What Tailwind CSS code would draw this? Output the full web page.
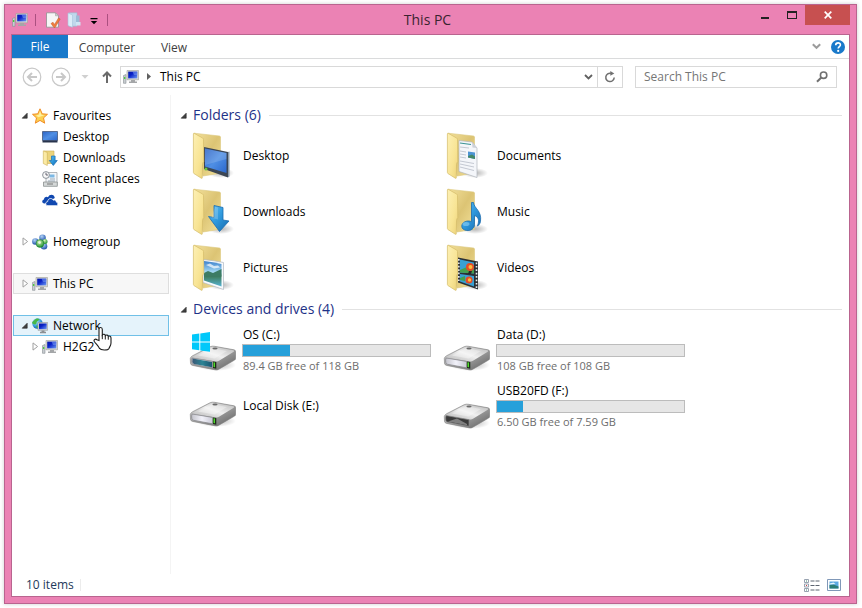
<!DOCTYPE html>
<html lang="en">
<head>
  <meta charset="UTF-8" />
  <meta name="viewport" content="width=device-width, initial-scale=1.0"/>
  <title>This PC</title>
  <script src="https://cdn.jsdelivr.net/npm/@tailwindcss/browser@4"></script>
</head>
<body class="h-screen bg-white pt-1 pl-1 pr-[5px] pb-1 font-['Open_Sans',sans-serif] text-[12px] leading-4 text-black">

  <!-- shared icons; not display:none, the gradients would stop working -->
  <svg class="absolute size-0" aria-hidden="true">
    <defs>
      <linearGradient id="flap" x1="0" y1="0" x2="1" y2="1"><stop offset="0" stop-color="#fdf0b4"/><stop offset=".6" stop-color="#f8e494"/><stop offset="1" stop-color="#ecd27a"/></linearGradient>
      <linearGradient id="back" x1="0" y1="0" x2="1" y2="1"><stop offset="0" stop-color="#f3e09a"/><stop offset=".5" stop-color="#dcc474"/><stop offset="1" stop-color="#f4e29c"/></linearGradient>
      <linearGradient id="screen" x1="0" y1="0" x2="1" y2="1"><stop offset="0" stop-color="#2b62c4"/><stop offset=".5" stop-color="#4f8fe4"/><stop offset="1" stop-color="#2a66cc"/></linearGradient>
      <linearGradient id="pcscreen" x1="0" y1="0" x2="1" y2="1"><stop offset="0" stop-color="#0518a8"/><stop offset=".4" stop-color="#0a22c8"/><stop offset="1" stop-color="#6f9cf4"/></linearGradient>
      <linearGradient id="arrow" x1="0" y1="0" x2="1" y2="1"><stop offset="0" stop-color="#5cc0f4"/><stop offset=".5" stop-color="#2e98dc"/><stop offset="1" stop-color="#1668ac"/></linearGradient>
      <linearGradient id="dtop" x1="0" y1="1" x2="1" y2="0"><stop offset="0" stop-color="#b4b4b4"/><stop offset=".5" stop-color="#f0f0f0"/><stop offset="1" stop-color="#b8b8b8"/></linearGradient>
      <linearGradient id="dside" x1="0" y1="0" x2="1" y2="1"><stop offset="0" stop-color="#dadada"/><stop offset=".5" stop-color="#a2a2a2"/><stop offset="1" stop-color="#5e5e5e"/></linearGradient>
      <linearGradient id="dfront" x1="0" y1="0" x2="1" y2="0"><stop offset="0" stop-color="#c4c4cc"/><stop offset=".5" stop-color="#f2f2fa"/><stop offset="1" stop-color="#cacad6"/></linearGradient>
      <linearGradient id="teal" x1="0" y1="0" x2="1" y2="0"><stop offset="0" stop-color="#3a5876"/><stop offset=".5" stop-color="#2c8494"/><stop offset="1" stop-color="#1c5470"/></linearGradient>
      <linearGradient id="sky" x1="0" y1="0" x2="0" y2="1"><stop offset="0" stop-color="#3c80cc"/><stop offset=".45" stop-color="#a8dcf4"/><stop offset=".6" stop-color="#3e7c5c"/><stop offset="1" stop-color="#58b4d4"/></linearGradient>
      <radialGradient id="shade"><stop offset="0" stop-color="#000" stop-opacity=".3"/><stop offset="1" stop-color="#000" stop-opacity="0"/></radialGradient>
      <radialGradient id="globe" cx=".35" cy=".3" r=".8"><stop offset="0" stop-color="#b4ecf8"/><stop offset=".6" stop-color="#2e98dc"/><stop offset="1" stop-color="#0c4494"/></radialGradient>
      <radialGradient id="ballb" cx=".4" cy=".3" r=".7"><stop offset="0" stop-color="#b4d4f8"/><stop offset="1" stop-color="#1c50a8"/></radialGradient>
      <radialGradient id="ballg" cx=".4" cy=".3" r=".7"><stop offset="0" stop-color="#d0f4b0"/><stop offset="1" stop-color="#1e9030"/></radialGradient>
    </defs>

    <symbol id="pc" viewBox="0 0 16 16">
      <path d="M.5 6.5 3 5.5v8.8H.5z" fill="#c8ccd0" stroke="#888e94" stroke-width=".6"/>
      <path d="M1 8h1.3v2H1z" fill="#4ccc3c"/>
      <path d="M4 1.5h11.500v9.300H4z" fill="#dcdcd4" stroke="#9a9c98" stroke-width=".6"/>
      <path d="M5.200 2.600h9.100v6.800H5.200z" fill="url(#pcscreen)"/>
      <path d="M9.500 2.600h4.800v3.500L11 6z" fill="#7ca0f4" opacity=".55"/>
      <path d="M8 11h4v1.600h2v1.400H6v-1.400h2z" fill="#a4a6a8"/>
    </symbol>

    <symbol id="folder" viewBox="0 0 48 48">
      <ellipse cx="33" cy="41" rx="13" ry="5" fill="url(#shade)"/>
      <path d="M6 1.200 31.500 4q1 .2 1 1.200v36L15 44z" fill="url(#back)" stroke="#dcc87c" stroke-width=".6"/>
    </symbol>
    <symbol id="flapfront" viewBox="0 0 48 48">
      <path d="M5.400 2q0-1 1-.6L14.600 6q.8.500.9 1.500l.3 22q-1 1-1.300 3l-.2 13.200q0 1-1 .5l-7.300-4.600q-.6-.4-.6-1.200z" fill="url(#flap)" stroke="#d4bc68" stroke-width=".7"/>
    </symbol>

    <symbol id="drive" viewBox="0 0 48 48">
      <ellipse cx="28" cy="39" rx="20" ry="6" fill="url(#shade)"/>
      <path d="M2.300 32.500q.2-1.500 2-2.600L22 20.800q2-1 4.500-.5l19.500 3.500q1.600.3 1.700 2v6.500q0 1-1 1.700L30.500 43.400q-1.500.9-3 .5L4.500 39.400q-1.700-.4-2-1.900z" fill="url(#dside)" stroke="#808080" stroke-width=".6"/>
      <path d="M4 31 22.500 21.300q1.700-.8 4-.4L45.500 24.300q1.500.5.200 1.400L31 34.800q-1.500.9-3 .6L4.500 31.800z" fill="url(#dtop)"/>
      <path d="m10 29.500 14-7.300 15 2.800-12.500 7.400z" fill="#fff" opacity=".35"/>
      <ellipse cx="27" cy="22.500" rx="2.600" ry=".9" fill="#6a6a6a"/>
    </symbol>
    <symbol id="panel" viewBox="0 0 48 48">
      <path d="m4 32 20.500 3.400v6.400L5.500 38.300q-1.500-.3-1.700-1.800-.5-2.500.2-4.500z" fill="url(#dfront)" stroke="#848488" stroke-width=".7"/>
      <path d="m25 35.500 3.300.5v6.700l-3.300-.6z" fill="#1c2c18"/>
      <path d="m25.500 36.200 1.500.2v4.800l-1.500-.2z" fill="#4fd82c"/>
    </symbol>
    <symbol id="open" viewBox="0 0 7 7"><path d="M6.200 1.200v5H1.200z" fill="#404040" stroke="#222" stroke-width=".6"/></symbol>
    <symbol id="closed" viewBox="0 0 7 9"><path d="M1 .9 5.600 4.500 1 8.100z" fill="#fff" stroke="#a0a0a0"/></symbol>
  </svg>

  <div class="flex h-full flex-col border border-[#b9648f] bg-[#eb82b4] px-[6px] pb-[6px] shadow-[0_0_4px_rgba(0,0,0,0.2)]">

    <header class="flex h-[29px] shrink-0 items-center">
      <div class="flex items-center">
        <svg class="ml-px size-4" role="img" aria-label="This PC"><use href="#pc"/></svg>
        <span class="ml-[7px] h-3 w-px bg-[#ab5080]"></span>
        <button class="ml-[9px]" aria-label="Properties">
          <svg class="size-4" viewBox="0 0 16 16"><path d="M1.500.8h9l3 3v11.400h-12z" fill="#f6f6f6" stroke="#909090" stroke-width=".8"/><path d="M10.500.8v3h3z" fill="#d0d0d0" stroke="#a0a0a0" stroke-width=".6"/><path d="m6 11.500 2-1.300 1.500 2.200L13.500 6l1.700 1L10 15.600H9z" fill="#ee7c40" stroke="#c85c28" stroke-width=".5"/></svg>
        </button>
        <button class="ml-[6px]" aria-label="New folder">
          <svg class="size-4" viewBox="0 0 16 16"><path d="M2 .8h8v13.400H2z" fill="#c0d8ec" stroke="#98b8d0" stroke-width=".6"/><path d="M9 3.500h3.500v9.500H9z" fill="#9cbcd8"/><path d="M1 1l4.500 2v12.300L1 13.600z" fill="#dcecf8" stroke="#a8c4dc" stroke-width=".6"/><path d="M9 10h4.500v3.500H9z" fill="#d0e4f4"/></svg>
        </button>
        <button class="ml-[7px]" aria-label="Customise toolbar">
          <svg class="h-3 w-2" viewBox="0 0 8 12"><path d="M.5 4h7v1.200h-7zM.8 7h6.400L4 10.300z" fill="#000"/></svg>
        </button>
        <span class="ml-[9px] h-3 w-px bg-[#ab5080]"></span>
      </div>
      <h1 class="flex-1 pr-1 text-center text-[14px] leading-5 text-[#3a2430]">This PC</h1>
      <div class="flex self-start">
        <button class="flex h-5 w-[27px] items-center justify-center" aria-label="Minimise"><svg class="h-3 w-2" viewBox="0 0 8 12"><path d="M0 8h8v2H0z" fill="#222"/></svg></button>
        <button class="flex h-5 w-[27px] items-center justify-center" aria-label="Maximise"><svg class="h-2 w-[10px]" viewBox="0 0 10 8"><path d="M0 0h10v8H0zM1 2v5h8V2z" fill="#222" fill-rule="evenodd"/></svg></button>
        <button class="flex h-5 w-[45px] items-center justify-center bg-[#c75050]" aria-label="Close"><svg class="size-2" viewBox="0 0 8 8"><path d="m.7.7 6.600 6.600m0-6.600L.7 7.300" stroke="#fff" stroke-width="1.700"/></svg></button>
      </div>
    </header>

    <div class="flex min-h-0 flex-1 flex-col border border-[#b9648f] bg-white">

      <nav class="flex h-6 shrink-0 items-center border-b border-[#dadbdc] text-[#404040]">
        <button class="h-full w-14 bg-[#1979ca] text-white">File</button>
        <button class="h-full w-[78px] pt-[2px]">Computer</button>
        <button class="h-full w-14 pt-[2px]">View</button>
        <div class="ml-auto flex items-center gap-[10px] pr-1">
          <button aria-label="Expand the ribbon"><svg class="block h-[7px] w-[9px]" viewBox="0 0 9 7"><path d="m.8 1.200 3.700 3.600 3.700-3.600" fill="none" stroke="#9c9c9c" stroke-width="2"/></svg></button>
          <button aria-label="Help"><svg class="block size-[14px]" viewBox="0 0 14 14"><circle cx="7" cy="7" r="7" fill="#1979ca"/><path d="M4.700 5.200c0-3.200 4.900-3 4.700-.2C9.300 6.500 7.200 6.700 7.200 8.500" fill="none" stroke="#fff" stroke-width="1.600"/><circle cx="7.200" cy="10.900" r="1.100" fill="#fff"/></svg></button>
        </div>
      </nav>

      <div class="flex h-9 shrink-0 items-center pr-3 pb-px pl-[10px]">
        <button aria-label="Back"><svg class="block size-5" viewBox="0 0 20 20" fill="none" stroke="#c8c8c8"><circle cx="10" cy="10" r="8.800" stroke-width="1.200"/><path d="M15 10H6m4-4-4 4 4 4" stroke-width="2"/></svg></button>
        <button class="ml-[9px]" aria-label="Forward"><svg class="block size-5" viewBox="0 0 20 20" fill="none" stroke="#c8c8c8"><circle cx="10" cy="10" r="8.800" stroke-width="1.200"/><path d="M5 10h9m-4-4 4 4-4 4" stroke-width="2"/></svg></button>
        <button class="ml-[10px]" aria-label="Recent locations"><svg class="block h-1 w-2" viewBox="0 0 8 4"><path d="M.5 0h7L4 3.800z" fill="#d0d0d0"/></svg></button>
        <button class="ml-[13px]" aria-label="Up"><svg class="block h-3 w-[10px]" viewBox="0 0 10 12"><path d="M5 12V1.500M1 5.500l4-4 4 4" fill="none" stroke="#6a6a6a" stroke-width="2"/></svg></button>
        <div class="ml-2 flex h-[22px] flex-1 items-center border border-[#d9d9d9]">
          <svg class="ml-[2px] size-4"><use href="#pc"/></svg>
          <svg class="ml-2 h-[7px] w-1" viewBox="0 0 4 7"><path d="M0 0v7l4-3.500z" fill="#606060"/></svg>
          <button class="ml-[9px]">This PC</button>
          <button class="mr-1 ml-auto" aria-label="Previous locations"><svg class="block h-[6px] w-[9px]" viewBox="0 0 9 6"><path d="m1 1 3.500 3.500L8 1" fill="none" stroke="#606060" stroke-width="1.800"/></svg></button>
          <button class="flex h-full w-[25px] items-center justify-center border-l border-[#d9d9d9]" aria-label="Refresh"><svg class="block size-3" viewBox="0 0 12 12"><path d="M7 2.300A4.200 4.200 0 1 0 10.200 6.500" fill="none" stroke="#707070" stroke-width="1.500"/><path d="M6.300 0v4.800l4-2.400z" fill="#707070"/></svg></button>
        </div>
        <div class="ml-3 flex h-[22px] w-[202px] items-center border border-[#d9d9d9] px-2">
          <input type="search" aria-label="Search This PC" placeholder="Search This PC" class="min-w-0 flex-1 outline-none placeholder:text-[#767676]"/>
          <svg class="size-3" viewBox="0 0 12 12"><circle cx="7.600" cy="4.200" r="3.200" fill="none" stroke="#707070" stroke-width="1.600"/><path d="M5.300 6.500 1 10.800" stroke="#707070" stroke-width="2"/></svg>
        </div>
      </div>

      <div class="flex min-h-0 flex-1">
        <aside class="w-[159px] shrink-0 border-r border-[#f4f4f4] pt-[10px] pr-px pl-px">
          <ul>
            <li><a href="#" class="flex h-[21px] items-center pl-2"><svg class="size-[7px]"><use href="#open"/></svg>
              <svg class="mr-[5px] ml-1 size-4" viewBox="0 0 16 16"><path d="m8 .8 2.200 5 5.300.5-4 3.600 1.200 5.300L8 12.400l-4.700 2.800 1.200-5.300-4-3.600 5.300-.5z" fill="#fcd050" stroke="#f08c28"/><path d="m8 3 1.300 3.800 3 .5-5.800 2L4 7.500l2.800-.7z" fill="#fff0a0"/></svg>Favourites</a></li>
            <li><a href="#" class="flex h-[21px] items-center pl-[29px]"><svg class="mr-[5px] size-4" viewBox="0 0 16 16"><path d="M.5 2.500h15v9H.5z" fill="url(#screen)" stroke="#44587c" stroke-width=".8"/><path d="M.5 11.500h15v2H.5z" fill="#28344c"/></svg>Desktop</a></li>
            <li><a href="#" class="flex h-[21px] items-center pl-[29px]"><svg class="mr-[5px] size-4" viewBox="0 0 16 16"><path d="M2 1h10v12.500H5z" fill="#ecd47c" stroke="#ccb058" stroke-width=".6"/><path d="m1.300.8 4 1.700v13l-4-2z" fill="#fbeaa4" stroke="#ccb058" stroke-width=".6"/><path d="M9.500 6h3.600v4.500h2.200L11.300 15.500 7.300 10.500h2.200z" fill="url(#arrow)" stroke="#1a70b8" stroke-width=".7"/></svg>Downloads</a></li>
            <li><a href="#" class="flex h-[21px] items-center pl-[29px]"><svg class="mr-[5px] size-4" viewBox="0 0 16 16"><path d="M4 1.500h11V14H4z" fill="#f4f6f8" stroke="#a0a4a8" stroke-width=".8"/><path d="M7.500 3.500h5v3h-5z" fill="#7cb8e4"/><path d="M8 8h5M6 10h7" stroke="#98a8b8"/><path d="M1.500 11h13.800v4.300H1.500z" fill="#d4d8d8" stroke="#8c9090" stroke-width=".8"/><path d="M5 13h6" stroke="#777"/><circle cx="4" cy="4" r="3.400" fill="#f8f8f8" stroke="#808890" stroke-width=".9"/><path d="M4 1.800V4h2" fill="none" stroke="#445" stroke-width=".8"/></svg>Recent places</a></li>
            <li><a href="#" class="flex h-[21px] items-center pl-[29px]"><svg class="mr-[5px] size-4" viewBox="0 0 16 16"><path d="M3 11.500H2.300C-.5 11.500-.3 7.800 2 7.500 2 5 4.600 4 6 5.200 7.500 1.500 12.500 2 12.800 6z" fill="#1048b0"/><path d="M6 13.700c-3 0-3-3.900-.3-4.100C5.800 6 10.300 5.600 11.300 8.200c1.600-.7 3.100.3 3 1.900 2.200.3 2 3.600-.2 3.600z" fill="#1048b0" stroke="#fff" stroke-width=".8"/></svg>SkyDrive</a></li>
          </ul>
          <a href="#" class="mt-[21px] flex h-[21px] items-center pl-[9px]"><svg class="h-[9px] w-[7px]"><use href="#closed"/></svg>
            <svg class="mr-[5px] ml-[3px] size-4" viewBox="0 0 16 16"><circle cx="10.500" cy="3.800" r="3.300" fill="url(#ballb)"/><circle cx="3.300" cy="7.500" r="3.200" fill="url(#ballb)"/><circle cx="12" cy="12.300" r="3.300" fill="url(#ballb)"/><circle cx="13" cy="7.500" r="2.500" fill="url(#ballg)"/><circle cx="8" cy="9.500" r="3.900" fill="url(#ballg)" stroke="#167828" stroke-width=".5"/><circle cx="7.600" cy="8.600" r="1.400" fill="#fff" opacity=".7"/></svg>Homegroup</a>
          <a href="#" class="mt-[21px] flex h-[21px] items-center border border-[#dedede] bg-[#f7f7f7] pl-2"><svg class="h-[9px] w-[7px]"><use href="#closed"/></svg><svg class="mr-[5px] ml-[3px] size-4"><use href="#pc"/></svg>This PC</a>
          <a href="#" class="relative mt-[21px] flex h-[21px] items-center border border-[#70c0e7] bg-[#e5f3fb] pl-[7px]"><svg class="size-[7px]"><use href="#open"/></svg>
            <svg class="mr-[5px] ml-1 size-4" viewBox="0 0 16 16"><circle cx="5.500" cy="5.500" r="5.200" fill="url(#globe)"/><path d="M2 2.500C4 0 6 .5 7.500 1 7 3 4.500 3 4.500 5S2 6.500.6 5.500 1 3.500 2 2.500zM4 7.500l3 .5-2 2.500z" fill="#48b848"/><path d="M6 4.500h9.700v7.800H6z" fill="#dcdcd4" stroke="#909498" stroke-width=".6"/><path d="M7 5.500h7.700v5.700H7z" fill="url(#pcscreen)"/><path d="M9.500 12.500h3v1.300h1.500v1.400H8v-1.400h1.500z" fill="#8c9094"/></svg>Network
            <svg class="absolute top-[10px] left-[79px] z-10 h-[26px] w-[19px]" viewBox="0 0 19 26" aria-hidden="true"><path d="M6 14.500V3.500C6 .8 9.300.8 9.300 3.500V9c1-1.200 2.800-.8 3 .6 1-1 2.800-.5 3 .8 1-.8 2.700-.2 2.700 1.500v5c0 2.500-1.500 4-2 5.500-1 2-8 2.200-9.500 0C5 19.500 3 18 1.300 15.500.3 13.500 2.500 12.500 4 13.700z" fill="#fff" stroke="#1c1c1c" stroke-width="1.100"/><path d="M9.300 9v4.200m3-3.500v3.800m3-2.800v3" stroke="#1c1c1c"/></svg></a>
          <a href="#" class="flex h-[21px] items-center pl-[19px]"><svg class="h-[9px] w-[7px]"><use href="#closed"/></svg><svg class="mr-[5px] ml-[3px] size-4"><use href="#pc"/></svg>H2G2</a>
        </aside>

        <main class="min-w-0 flex-1 pt-[7px] pr-[7px] pl-[9px]">
          <section>
            <h2 class="flex h-[26px] items-center text-[14px] leading-5 text-[#1e3287]"><svg class="mr-[6px] size-[7px]"><use href="#open"/></svg>Folders (6)<span class="ml-2 h-px flex-1 bg-[#e2e2e2]"></span></h2>
            <ul class="grid grid-cols-[254px_254px] pl-2">
              <li class="flex h-14 items-center gap-[7px]">
                <svg class="size-12" viewBox="0 0 48 48"><use href="#folder"/><path d="m16 15 24 5v25.500L16 37z" fill="#3c4654"/><path d="m17 16.500 21.500 4.600v20L17 34.500z" fill="url(#screen)"/><path d="m17 16.500 21.500 4.600v6L17 33z" fill="#fff" opacity=".15"/><path d="m40 20 1.500-.5V44.500l-1.500 1z" fill="#8c9cac"/><circle cx="18" cy="37" r="1.500" fill="#6cc43c"/><use href="#flapfront"/></svg>Desktop</li>
              <li class="flex h-14 items-center gap-[7px]">
                <svg class="size-12" viewBox="0 0 48 48"><use href="#folder"/><path d="M17 8.500 30 10l5 6v29.500l-18-6z" fill="#f4f6fa" stroke="#b0b4bc" stroke-width=".7"/><path d="m30 10 .5 5.500 4.500.5z" fill="#ccd0d8"/><path d="m18 11 11 1.500" stroke="#3c9494" stroke-width="1.200"/><path d="M26 19.500l7 1v6.500l-7-1.500z" fill="#4c94d4"/><path d="m26 24 4-1.500 3 2V27l-7-1.500z" fill="#448868"/><path d="m18 15 9 1m-9 3 6 1m-6 2 6 1m-6 2 6 1m-6 3 14 2.500m-14 .5 14 3m-14 0 14 3.500" stroke="#b8bcc8" stroke-width=".8"/><use href="#flapfront"/></svg>Documents</li>
              <li class="flex h-14 items-center gap-[7px]">
                <svg class="size-12" viewBox="0 0 48 48"><use href="#folder"/><path d="m26 17.500 9 2v12.500l6 1L31.500 43.500 20.500 28.500l5.500 1z" fill="url(#arrow)" stroke="#1a6cb0" stroke-width=".8"/><path d="m27 18.800 3 .7v12l-6.500-1.800z" fill="#fff" opacity=".2"/><use href="#flapfront"/></svg>Downloads</li>
              <li class="flex h-14 items-center gap-[7px]">
                <svg class="size-12" viewBox="0 0 48 48"><use href="#folder"/><path d="M29.500 14.500h2c.5 6 8.500 8 7 19-.5 2.500-2 4-3 4.500 2-6 1-9-3-10.500v9c0 4-3.500 6.500-8 6-7-1-6-9 1.500-9.500 1.500 0 2.500.2 3.500.7z" fill="url(#arrow)" stroke="#1a6cb0" stroke-width=".8"/><ellipse cx="24" cy="36" rx="3.500" ry="2" fill="#a0dcfc" opacity=".5"/><use href="#flapfront"/></svg>Music</li>
              <li class="flex h-14 items-center gap-[7px]">
                <svg class="size-12" viewBox="0 0 48 48"><use href="#folder"/><path d="M15 15.500q11 1 20.500 3v27L15 38.500z" fill="#f8fafc" stroke="#b0b8c0" stroke-width=".7"/><path d="M16 17q9 1 17.500 3v22.500L16 36.500z" fill="url(#sky)"/><path d="m16 29 4-2 5 2 8.500-4v7.500L25 33l-9-1z" fill="#3c7c64"/><path d="m18 21 4-1.500 4 2.500 4-.5 2 2-6 1z" fill="#fff" opacity=".7"/><use href="#flapfront"/></svg>Pictures</li>
              <li class="flex h-14 items-center gap-[7px]">
                <svg class="size-12" viewBox="0 0 48 48"><use href="#folder"/><path d="m16 13.500 20 4v28l-20-7z" fill="#2c3034"/><path d="m18 15.500 14 3v11l-14-1zm0 14.500 14 2v10.500L18 37.500z" fill="#38a0d4"/><path d="m18 26 7-3 7 2v4.500l-14-1z" fill="#44a04c"/><circle cx="28" cy="23" r="4" fill="#e44c28"/><circle cx="28.500" cy="23" r="2" fill="#fcc038"/><path d="m27 27 3 0-1 3h-3z" fill="#282828"/><circle cx="27" cy="36" r="3.500" fill="#e44c28"/><circle cx="27.500" cy="36" r="1.700" fill="#fcc038"/><path d="m18 34 5-2v5l-5-1z" fill="#44a04c"/><path d="M34.500 18.500v26M16.800 15v23" stroke="#e8ecf0" stroke-width="1.600" stroke-dasharray="1.700 1.700"/><use href="#flapfront"/></svg>Videos</li>
            </ul>
          </section>

          <section>
            <h2 class="flex h-[26px] items-center text-[14px] leading-5 text-[#1e3287]"><svg class="mr-[6px] size-[7px]"><use href="#open"/></svg>Devices and drives (4)<span class="ml-2 h-px flex-1 bg-[#e2e2e2]"></span></h2>
            <ul class="grid grid-cols-[254px_254px] pl-2">
              <li class="flex h-14 items-center gap-[6px]">
                <svg class="size-12" viewBox="0 0 48 48"><use href="#drive"/><use href="#panel"/><path d="m4.500 32.500 19.500 3.400v5.400L6 37.900q-1.500-.5-1.700-1.800z" fill="url(#teal)"/><path d="m4 8.500 7.300-1v8H4zm8.300-1.100L22 6v9.500h-9.700zM4 16.500h7.300v7.800L4 23.300zm8.300 0H22v9.300l-9.700-1.400z" fill="#00c8fa"/></svg>
                <div class="w-[189px]">
                  <p class="px-px">OS (C:)</p>
                  <div class="mt-px h-[13px] border border-[#bcbcbc] bg-[#e6e6e6]"><div class="h-full bg-[#26a0da]" style="width: 25%"></div></div>
                  <p class="mt-px px-px text-[11px] text-[#6d6d6d]">89.4 GB free of 118 GB</p>
                </div>
              </li>
              <li class="flex h-14 items-center gap-[6px]">
                <svg class="size-12" viewBox="0 0 48 48"><use href="#drive"/><use href="#panel"/></svg>
                <div class="w-[189px]">
                  <p class="px-px">Data (D:)</p>
                  <div class="mt-px h-[13px] border border-[#bcbcbc] bg-[#e6e6e6]"></div>
                  <p class="mt-px px-px text-[11px] text-[#6d6d6d]">108 GB free of 108 GB</p>
                </div>
              </li>
              <li class="flex h-14 items-center gap-[7px]">
                <svg class="size-12" viewBox="0 0 48 48"><use href="#drive"/><use href="#panel"/></svg>Local Disk (E:)</li>
              <li class="flex h-14 items-center gap-[6px]">
                <svg class="size-12" viewBox="0 -2 48 48"><use href="#drive" width="48" height="48"/><path d="m4 31.500 23 4.200v6.600L18 40.500 5.500 38q-1.500-.3-1.700-1.800-.5-2.500.2-4.700z" fill="#3a3a3a" stroke="#888" stroke-width=".7"/><path d="m6 37.500 9-3 10 5.500v1.300z" fill="#808080"/></svg>
                <div class="w-[189px]">
                  <p class="px-px">USB20FD (F:)</p>
                  <div class="mt-px h-[13px] border border-[#bcbcbc] bg-[#e6e6e6]"><div class="h-full bg-[#26a0da]" style="width: 14%"></div></div>
                  <p class="mt-px px-px text-[11px] text-[#6d6d6d]">6.50 GB free of 7.59 GB</p>
                </div>
              </li>
            </ul>
          </section>
        </main>
      </div>

      <footer class="flex h-[22px] shrink-0 items-center pr-2 pl-[14px] text-[#1e395b]">
        <span class="w-[54px]">10 items</span>
        <span class="h-3 w-px bg-[#ececec]"></span>
        <button class="ml-auto" aria-label="Details view"><svg class="block h-[13px] w-4" viewBox="0 0 16 13"><path d="M.5.500h4v3h-4zm0 4.500h4v3h-4zm0 4.500h4v3h-4z" fill="#fff" stroke="#8c98a8" stroke-width=".9"/><path d="M2 1.500h1v1H2zm0 9h1v1H2z" fill="#3c8c6c"/><path d="M2 6h1v1H2z" fill="#d03c3c"/><path d="M6.500 2h4m1 0h4m-9 4.500h4m1 0h4m-9 4.500h4m1 0h4" stroke="#5c6470"/></svg></button>
        <button class="ml-[7px]" aria-label="Large icons view"><svg class="block h-3 w-[14px]" viewBox="0 0 14 12"><path d="M.5.500h13v11H.5z" fill="#fff" stroke="#8098b8"/><path d="M2.500 2.500h9v7h-9z" fill="#5ca8e0"/><path d="m2.500 6 4-.500 5 2v2h-9z" fill="#2c7c74"/><path d="m2.500 4.500 4-1 2 1.500-6 .5z" fill="#e4f4fc"/></svg></button>
      </footer>
    </div>
  </div>

</body>
</html>
